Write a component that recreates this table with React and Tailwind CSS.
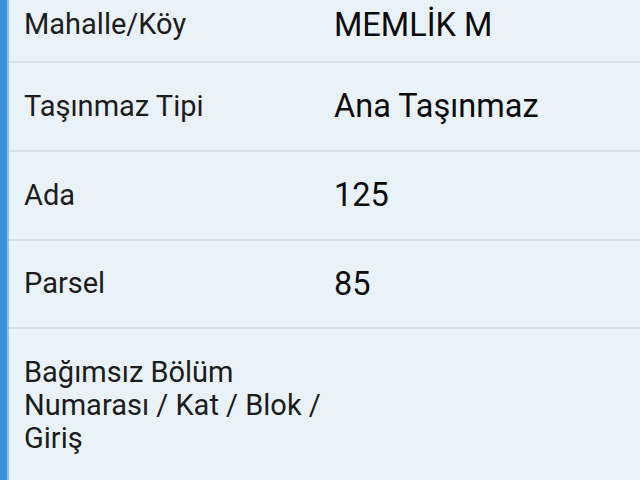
const rows = [
  { label: "Taşınmaz Tipi", value: "Ana Taşınmaz", h: "h-[89px]" },
  { label: "Ada", value: "125", h: "h-[89px]" },
  { label: "Parsel", value: "85", h: "h-[88px]" },
];

function Row({ label, value, className }) {
  return (
    <div className={`flex items-center border-b-2 border-[#d9e2e8] ${className}`}>
      <div className="w-[325px] pl-[15px] text-[29px] text-[#1c1c1c]">{label}</div>
      <div className="text-[32.5px] text-[#0b0b0b]">{value}</div>
    </div>
  );
}

export default function App() {
  return (
    <div
      className="w-[640px] h-[480px] overflow-hidden flex bg-[#e9f2f9]"
      style={{ fontFamily: "Roboto, 'Noto Sans', sans-serif" }}
    >
      <div className="w-[7px] bg-[#3d8fd9] shrink-0" />
      <div className="w-[2px] bg-[#8cc0ec] shrink-0" />
      <div className="flex-1 flex flex-col">
        <Row label="Mahalle/Köy" value="MEMLİK M" className="h-[63px] pb-[11px]" />
        {rows.map((r) => (
          <Row key={r.label} label={r.label} value={r.value} className={r.h} />
        ))}
        <div className="flex pt-[27px]">
          <div className="w-[325px] pl-[15px] text-[29px] leading-[33px] text-[#1c1c1c]">
            Bağımsız Bölüm Numarası / Kat / Blok / Giriş
          </div>
        </div>
      </div>
    </div>
  );
}
